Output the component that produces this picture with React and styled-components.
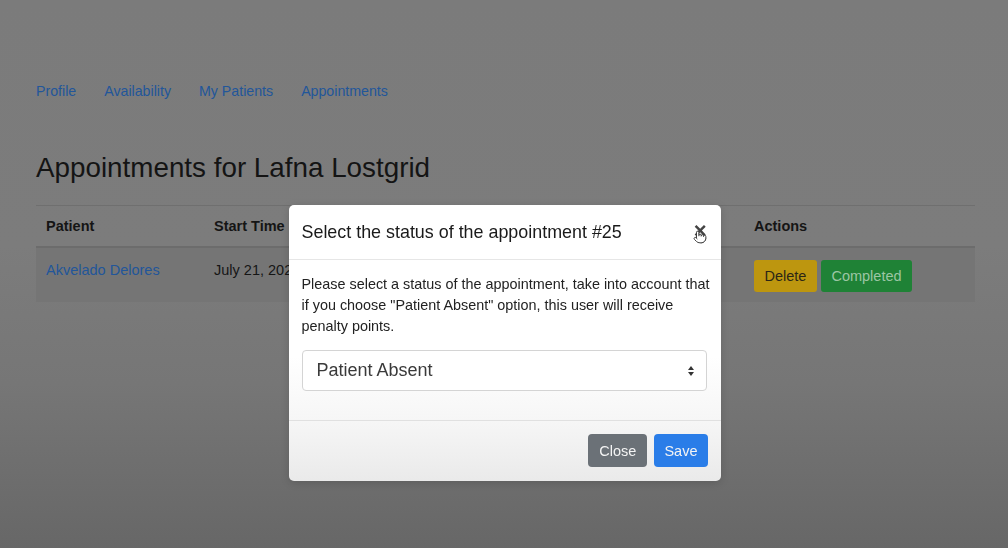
import React from "react";
import styled, { createGlobalStyle } from "styled-components";
import { Pointer } from "lucide-react";

const GlobalStyle = createGlobalStyle`
  html, body { margin: 0; padding: 0; }
  body {
    font-family: "Liberation Sans", Arial, sans-serif;
    background: #7b7b7b;
    width: 1008px;
    height: 548px;
    overflow: hidden;
  }
`;

const Page = styled.div`
  width: 1008px;
  height: 548px;
  background: linear-gradient(#7b7b7b 0%, #7c7c7c 45%, #767676 70%, #676767 100%);
  padding: 81px 33px 0 36px;
  box-sizing: border-box;
`;

const Nav = styled.nav`
  display: flex;
  gap: 28px;
  height: 21px;
  align-items: center;
`;

const NavLink = styled.a`
  font-size: 14.2px;
  color: #22569a;
  text-decoration: none;
  line-height: 21px;
`;

const Heading = styled.h1`
  margin: 49px 0 0;
  font-size: 27.8px;
  font-weight: 400;
  line-height: 34px;
  color: #141414;
`;

const Table = styled.table`
  margin-top: 20px;
  width: 939px;
  table-layout: fixed;
  border-collapse: collapse;
  font-size: 14.5px;
  color: #151515;
`;

const HeadCell = styled.th`
  text-align: left;
  font-weight: 700;
  padding: 0 10px;
  height: 40px;
  border-top: 1px solid #6f6f6f;
  border-bottom: 2px solid #6c6c6c;
  width: ${(p) => p.$w || "auto"};
`;

const Row = styled.tr`
  background: ${(p) => (p.$striped ? "#757575" : "transparent")};
`;

const Cell = styled.td`
  padding: 12px 10px 9px;
  height: 33px;
  vertical-align: top;
  line-height: 21px;
  white-space: nowrap;
`;

const CellLink = styled.a`
  color: #22569a;
  text-decoration: none;
`;

const Actions = styled.div`
  display: flex;
  gap: 4px;
`;

const RowButton = styled.button`
  font-family: inherit;
  font-size: 14.5px;
  height: 32px;
  padding: 0 10.5px;
  border: none;
  border-radius: 3px;
  background: ${(p) => p.$bg};
  color: ${(p) => p.$fg};
`;

const Backdrop = styled.div`
  position: fixed;
  inset: 0;
  display: flex;
  justify-content: center;
  align-items: flex-start;
  padding: 205px 0 0 1px;
`;

const Modal = styled.div`
  width: 432px;
  background: linear-gradient(#ffffff 0%, #ffffff 55%, #f6f6f6 78%, #eaeaea 100%);
  border-radius: 5px;
  box-shadow: 0 2px 8px rgba(0, 0, 0, 0.15);
  color: #1e1e1e;
`;

const ModalHeader = styled.div`
  position: relative;
  display: flex;
  align-items: center;
  justify-content: space-between;
  height: 54px;
  padding: 0 14px 0 13px;
  border-bottom: 1px solid #e6e6e6;
`;

const ModalTitle = styled.h5`
  margin: 0;
  font-size: 17.9px;
  font-weight: 400;
  color: #1a1a1a;
`;

const CloseX = styled.span`
  font-size: 22px;
  font-weight: 700;
  color: #444;
  line-height: 1;
  margin-top: -2px;
`;

const Cursor = styled.span`
  position: absolute;
  right: 14px;
  top: 25px;
  display: flex;
`;

const ModalBody = styled.div`
  padding: 14px 10px 29px 13px;
`;

const BodyText = styled.p`
  margin: 0;
  font-size: 14.4px;
  line-height: 21px;
  color: #222;
`;

const SelectBox = styled.div`
  margin: 13px 4px 0 0;
  height: 41px;
  border: 1px solid #d4d4d4;
  border-radius: 4px;
  display: flex;
  align-items: center;
  justify-content: space-between;
  padding: 0 11px 0 14px;
  box-sizing: border-box;
  font-size: 18px;
  color: #3a3a3a;
  background: #fff;
`;

const ModalFooter = styled.div`
  display: flex;
  justify-content: flex-end;
  gap: 7px;
  padding: 13px 13px 14px;
  border-top: 1px solid #e0e0e0;
`;

const FooterButton = styled.button`
  font-family: inherit;
  font-size: 14.5px;
  height: 33px;
  padding: 0 ${(p) => p.$px}px;
  border: none;
  border-radius: 4px;
  background: ${(p) => p.$bg};
  color: #f4f4f4;
`;

export default function App() {
  return (
    <>
      <GlobalStyle />
      <Page>
        <Nav>
          <NavLink>Profile</NavLink>
          <NavLink>Availability</NavLink>
          <NavLink>My Patients</NavLink>
          <NavLink>Appointments</NavLink>
        </Nav>
        <Heading>Appointments for Lafna Lostgrid</Heading>
        <Table>
          <thead>
            <tr>
              <HeadCell $w="148px">Patient</HeadCell>
              <HeadCell $w="520px">Start Time</HeadCell>
              <HeadCell>Actions</HeadCell>
            </tr>
          </thead>
          <tbody>
            <Row $striped>
              <Cell>
                <CellLink>Akvelado Delores</CellLink>
              </Cell>
              <Cell>July 21, 2021</Cell>
              <Cell>
                <Actions>
                  <RowButton $bg="#bd960f" $fg="#2b2616">Delete</RowButton>
                  <RowButton $bg="#1f8236" $fg="#9cc6a4">Completed</RowButton>
                </Actions>
              </Cell>
            </Row>
          </tbody>
        </Table>
      </Page>
      <Backdrop>
        <Modal>
          <ModalHeader>
            <ModalTitle>Select the status of the appointment #25</ModalTitle>
            <CloseX>×</CloseX>
            <Cursor>
              <Pointer size={14} fill="#fff" color="#333" strokeWidth={1.6} />
            </Cursor>
          </ModalHeader>
          <ModalBody>
            <BodyText>
              Please select a status of the appointment, take into account that
              if you choose "Patient Absent" option, this user will receive
              penalty points.
            </BodyText>
            <SelectBox>
              <span>Patient Absent</span>
              <svg width="8" height="12" viewBox="0 0 8 12">
                <path d="M4 1 L7 5 H1 Z" fill="#333" />
                <path d="M4 11 L7 7 H1 Z" fill="#333" />
              </svg>
            </SelectBox>
          </ModalBody>
          <ModalFooter>
            <FooterButton $bg="#6b7177" $px={11}>Close</FooterButton>
            <FooterButton $bg="#2a7de8" $px={10}>Save</FooterButton>
          </ModalFooter>
        </Modal>
      </Backdrop>
    </>
  );
}
